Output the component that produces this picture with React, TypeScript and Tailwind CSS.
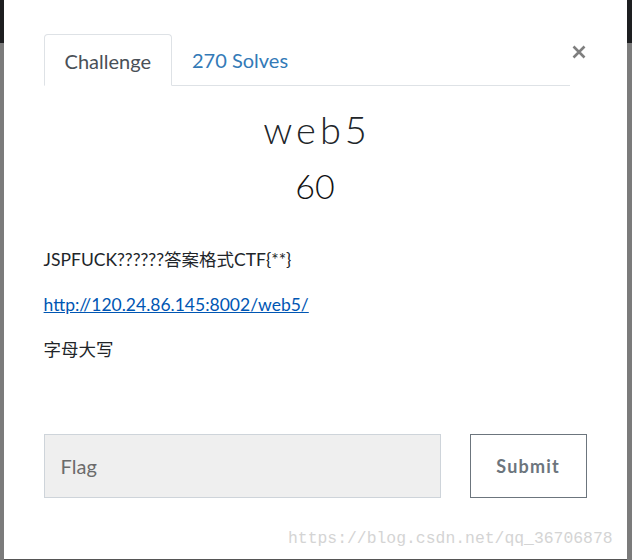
import React from "react";

export default function App() {
  return (
    <div className="flex h-[560px] w-[632px] overflow-hidden" style={{ fontFamily: "Lato, 'Noto Sans CJK SC', sans-serif" }}>
      <div className="flex w-[4px] flex-col">
        <div className="h-[43px] bg-[#1d1e20]" />
        <div className="flex-1 bg-[#7b7b7b]" />
      </div>
      <div className="relative flex flex-1 flex-col">
        <div className="flex-1 bg-white px-[40px] pt-[34px]">
          <div className="flex items-start">
            <div className="flex w-[526px] border-b border-[#dee2e6]">
              <div className="-mb-px rounded-t-[4px] border border-[#dee2e6] border-b-white bg-white px-[20px] pb-[12px] pt-[14px] text-[20px] leading-[24px] text-[#495057]">
                Challenge
              </div>
              <div className="px-[20px] pb-[12px] pt-[14px] text-[20px] leading-[24px] text-[#337ab7]">270 Solves</div>
            </div>
            <div className="ml-[1px] mt-[10px] flex h-[16px] w-[16px] items-center justify-center">
              <svg width="14" height="14" viewBox="0 0 14 14">
                <path d="M1.5 1.5 L12.5 12.5 M12.5 1.5 L1.5 12.5" stroke="#7f7f7f" strokeWidth="2.6" strokeLinecap="butt" />
              </svg>
            </div>
          </div>

          <div className="mt-[21px] flex flex-col items-center text-[#212529]">
            <div className="text-[38px] font-light leading-[44px] tracking-[4px] pl-[4px]">web5</div>
            <div className="mt-[15px] text-[34px] font-light leading-[40px] text-[#111]">60</div>
          </div>

          <div className="mt-[42px] text-[17.5px] text-[#212529]">
            <p className="leading-[24px]">JSPFUCK??????答案格式CTF{"{**}"}</p>
            <p className="mt-[21px] leading-[24px]">
              <a className="text-[#0056b3] underline">http://120.24.86.145:8002/web5/</a>
            </p>
            <p className="mt-[21px] leading-[24px]">字母大写</p>
          </div>

          <div className="mt-[72px] flex items-start">
            <div className="flex h-[64px] w-[397px] items-center border border-[#ced4da] bg-[#efefef] px-[16px] text-[20px] text-[#6b6b6b]">
              Flag
            </div>
            <div className="ml-[29px] flex h-[64px] w-[117px] items-center justify-center border border-[#6c757d] bg-white text-[18px] font-bold tracking-[1.2px] text-[#6c757d]">
              Submit
            </div>
          </div>
        </div>
        <div className="h-[1px] bg-[#555]" />
        <div className="absolute bottom-[8px] right-[14px] text-[16.4px] text-[#d4d4d4]" style={{ fontFamily: "'Liberation Mono', monospace" }}>
          https://blog.csdn.net/qq_36706878
        </div>
      </div>
      <div className="flex w-[6px] flex-col">
        <div className="h-[43px] bg-[#1d1e20]" />
        <div className="flex-1 bg-[#7b7b7b]" />
      </div>
    </div>
  );
}
